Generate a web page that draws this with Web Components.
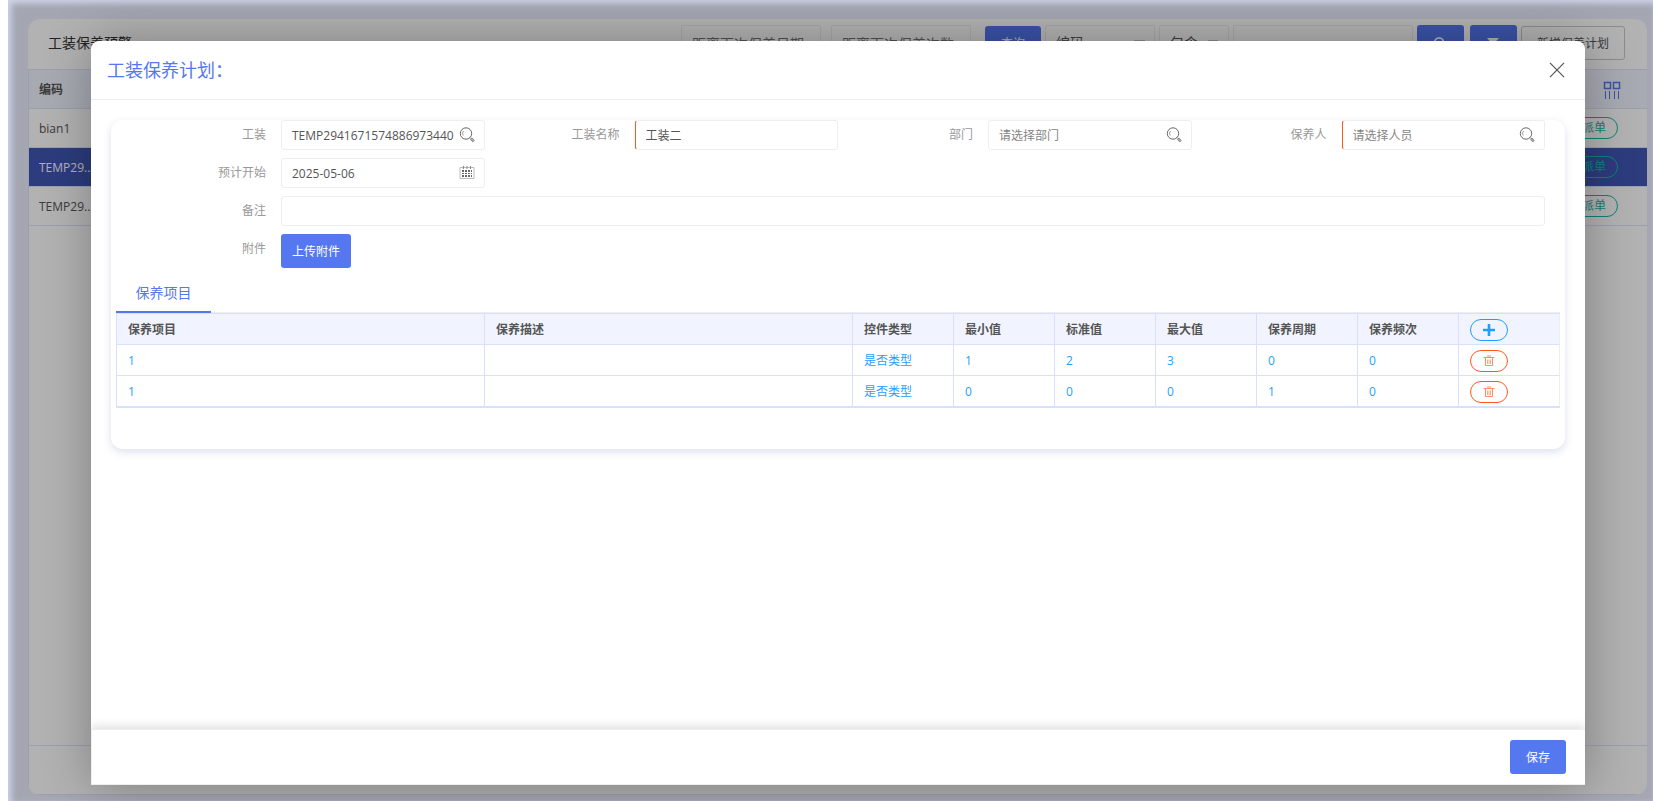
<!DOCTYPE html>
<html lang="zh-CN">
<head>
<meta charset="utf-8">
<title>工装保养预警</title>
<style>
  html, body { height: 100%; margin: 0; }
  body {
    --primary: #5578f0;
    --line: #d9e0fc;
    --head: #f1f4ff;
    background: #fff;
    color: #555;
    font: 12px/20px "Open Sans", "Noto Sans CJK SC", sans-serif;
    overflow: hidden;
  }
</style>
</head>
<body>
<app-shell>
  <warning-page></warning-page>
  <plan-dialog slot="overlay" heading="工装保养计划：">
    <plan-form></plan-form>
    <item-table></item-table>
    <ui-button slot="footer" size="save">保存</ui-button>
  </plan-dialog>
</app-shell>

<script>
const define = (name, html, setup) => {
  const template = document.createElement('template');
  template.innerHTML = '<style>*{box-sizing:border-box}</style>' + html;
  customElements.define(name, class extends HTMLElement {
    constructor() {
      super();
      this.attachShadow({ mode: 'open' }).append(template.content.cloneNode(true));
    }
    connectedCallback() {
      if (setup && !this.ready) { this.ready = true; setup(this, this.shadowRoot); }
    }
  });
};

const icons = {
  search: '<svg width="16" height="16" viewBox="0 0 16 16" fill="none" stroke="#666"><circle cx="7" cy="6.5" r="5.7"/><path d="M4.2 8.5A3.5 3.5 0 0 1 4.6 4" stroke="#999"/><path d="M11 10.5l1 1"/><path d="M12 11.5l2.8 2.8" stroke-width="2.6" stroke="#777"/><path d="M12.3 11.8l2.2 2.2" stroke="#eee" stroke-width=".9"/></svg>',
  date: '<svg width="16" height="16" viewBox="0 0 16 16"><path d="M1 2.5h14v11H1z" fill="none" stroke="#bbb"/><path d="M4.500 1v3M8 1v3M11.500 1v3" stroke="#888"/><path d="M3 5h2v2H3zM6 5h2v2H6zM9 5h2v2H9zM12 5h1v2h-1zM3 8h2v1H3zM6 8h2v1H6zM9 8h2v1H9zM12 8h1v1h-1zM3 10h2v2H3zM6 10h2v2H6zM9 10h2v2H9zM12 10h1v2h-1z" fill="#666"/></svg>'
};

define('ui-button', `
<style>
  :host { display: inline-flex; flex: none; }
  button {
    height: 34px; padding: 2px 11px 0; border: 0; border-radius: 3px;
    background: var(--primary); color: #fff; font: inherit; cursor: pointer;
  }
  :host([size="query"]) button, :host([size="save"]) button { padding: 2px 16px 0; }
  :host([kind="outline"]) button { padding: 2px 15px 0; border: 1px solid #c9c9c9; background: #fff; color: #555; }
  :host([kind="icon"]) button { display: grid; place-items: center; width: 47px; height: 36px; padding: 0; }
  :host([kind="pill"]) button {
    height: 22px; padding: 0 11px; border: 1px solid #16baaa; border-radius: 11px;
    background: transparent; color: #16baaa; line-height: 20px;
  }
</style>
<button type="button"><slot></slot></button>`, (host, root) => {
  if (host.hasAttribute('label')) root.querySelector('button').setAttribute('aria-label', host.getAttribute('label'));
});

define('app-shell', `
<style>
  :host { display: block; height: 100%; padding-left: 8px; }
  .stage { position: relative; display: flex; height: 100%; padding: 19px 6px 6px 20px; background: #ebf0ff; }
  .shade {
    position: absolute; inset: 0; display: flex; padding: 41px 68px 16px 83px;
    background: rgba(0,0,0,.3); box-shadow: inset 3px 3px 6px rgba(222,226,250,.8);
  }
</style>
<div class="stage"><slot></slot><div class="shade"><slot name="overlay"></slot></div></div>`);

define('warning-bar', `
<style>
  :host { display: flex; align-items: center; height: 48px; margin-bottom: 2px; padding: 0 22px 0 20px; gap: 4px; font-size: 14px; }
  h1 { flex: 1; margin: 0; color: #333; font: inherit; }
  .group { display: flex; gap: 4px; }
  .conditions { gap: 10px; margin-right: 10px; }
  .actions { gap: 6px; }
  input, select {
    height: 36px; border: 1px solid #eee; border-radius: 2px; padding: 0 10px;
    background: #fff; color: #555; font: inherit; width: 140px;
  }
  select {
    appearance: none; width: 110px;
    background: linear-gradient(to bottom right, #c2c2c2 50%, transparent 50%) right 9px top 14px / 6px 6px no-repeat,
      linear-gradient(to bottom left, #c2c2c2 50%, transparent 50%) right 15px top 14px / 6px 6px no-repeat, #fff;
  }
  select.short { width: 70px; }
  .keyword { width: 180px; }
  ui-button { font-size: 12px; }
</style>
<h1>工装保养预警</h1>
<div class="group conditions">
  <input aria-label="距离下次保养日期" placeholder="距离下次保养日期">
  <input aria-label="距离下次保养次数" placeholder="距离下次保养次数">
</div>
<ui-button size="query">查询</ui-button>
<div class="group">
  <select aria-label="字段"><option>编码</option></select>
  <select aria-label="条件" class="short"><option>包含</option></select>
  <input aria-label="关键字" class="keyword">
</div>
<div class="group actions">
  <ui-button kind="icon" label="搜索"><svg width="14" height="14" viewBox="0 0 16 16" fill="none" stroke="#fff" stroke-width="2"><circle cx="7" cy="7" r="5"/><path d="M11 11l4 4"/></svg></ui-button>
  <ui-button kind="icon" label="筛选"><svg width="12" height="12" viewBox="0 0 12 12" fill="#fff"><path d="M0 1h12L7.500 6v6l-3-2V6z"/></svg></ui-button>
</div>
<ui-button kind="outline">新增保养计划</ui-button>`);

define('warning-table', `
<style>
  :host { display: block; flex: 1; border: solid #dfe4ff; border-width: 1px 0 1px 1px; }
  table { width: 100%; border-collapse: separate; border-spacing: 0; table-layout: fixed; }
  th, td { height: 39px; padding: 2px 10px 0; border-bottom: 1px solid #dfe4ff; text-align: left; white-space: nowrap; }
  th { background: var(--head); }
  th:last-child, td:last-child { width: 140px; padding: 0 29px; text-align: right; }
  th:last-child { padding: 0 26px; }
  .selected td { background: #4056b3; color: #fff; }
  svg, ui-button { vertical-align: middle; }
</style>
<table>
  <thead><tr><th>编码</th><th><svg width="18" height="18" viewBox="0 0 18 18" fill="none" stroke="#5578f0"><path stroke-width="1.500" d="M1.500 1.500h6v6h-6zM10.500 1.500h6v6h-6z"/><path d="M2.500 10v8M6.500 10v8M11.500 10v8M15.500 10v8"/></svg></th></tr></thead>
  <tbody>
    <tr><td>bian1</td><td><ui-button kind="pill">派单</ui-button></td></tr>
    <tr class="selected"><td>TEMP29...</td><td><ui-button kind="pill">派单</ui-button></td></tr>
    <tr><td>TEMP29...</td><td><ui-button kind="pill">派单</ui-button></td></tr>
  </tbody>
</table>`);

define('warning-page', `
<style>
  :host { display: flex; flex: 1; flex-direction: column; min-width: 0; border-radius: 12px; background: #fff; overflow: hidden; }
  footer { height: 49px; border: solid #dfe4ff; border-width: 0 0 1px 1px; }
</style>
<warning-bar></warning-bar><warning-table></warning-table><footer></footer>`);

define('plan-dialog', `
<style>
  :host { display: flex; flex: 1; min-width: 0; }
  section {
    display: flex; flex: 1; flex-direction: column; min-width: 0; background: #fff;
    border-radius: 8px 8px 0 0; box-shadow: 1px 1px 50px rgba(0,0,0,.3);
  }
  header { display: flex; justify-content: space-between; align-items: center; height: 59px; padding: 0 20px 0 16px; border-bottom: 1px solid #eee; }
  h2 { margin: 0; color: var(--primary); font: inherit; font-size: 18px; }
  .close { display: grid; padding: 0; border: 0; background: none; cursor: pointer; }
  main { flex: 1; padding: 20px; }
  .card { padding-bottom: 41px; border-radius: 12px; box-shadow: 0 3px 8px rgba(80,100,170,.2); }
  footer {
    display: flex; justify-content: flex-end; padding: 10px 19px; border: 1px solid #eee; border-right: 0;
    box-shadow: 0 -2px 10px rgba(0,0,0,.15); clip-path: inset(-12px 0 0 0);
  }
</style>
<section role="dialog" aria-labelledby="title">
  <header>
    <h2 id="title"></h2>
    <button class="close" type="button" aria-label="关闭"><svg width="16" height="16" viewBox="0 0 17 17" stroke="#555" stroke-width="1.300"><path d="M1 1l15 15M16 1L1 16"/></svg></button>
  </header>
  <main><div class="card"><slot></slot></div></main>
  <footer><slot name="footer"></slot></footer>
</section>`, (host, root) => {
  root.querySelector('h2').textContent = host.getAttribute('heading');
});

define('form-field', `
<style>
  :host { display: flex; min-width: 0; }
  label { flex: none; width: 150px; padding: 5px 15px 5px 0; color: #999; text-align: right; }
  .box { display: flex; align-items: center; flex: 1; min-width: 0; height: 30px; padding: 0 9px 0 10px; border: 1px solid #eee; border-radius: 3px; background: #fff; }
  :host([required]) .box { border-left-color: #ff5722; }
  input { flex: 1; min-width: 0; height: 28px; padding: 0; border: 0; outline: 0; background: none; color: #555; font: inherit; }
  input::placeholder { color: #858585; }
  svg { flex: none; }
</style>
<label for="control"></label><div class="box"><input id="control"></div>`, (host, root) => {
  const input = root.querySelector('input');
  root.querySelector('label').textContent = host.getAttribute('label');
  input.value = host.getAttribute('value') || '';
  input.placeholder = host.getAttribute('placeholder') || '';
  root.querySelector('.box').insertAdjacentHTML('beforeend', icons[host.getAttribute('icon')] || '');
});

define('plan-form', `
<style>
  :host { display: block; padding: 0 20px; }
  form { display: grid; grid-template-columns: repeat(4, minmax(0, 1fr)); row-gap: 8px; }
  .start { grid-column: 1; }
  .wide { grid-column: 1 / -1; }
  .attach { display: flex; }
  .attach span { width: 150px; padding: 5px 15px 5px 0; color: #999; text-align: right; }
</style>
<form>
  <form-field label="工装" value="TEMP2941671574886973440" icon="search"></form-field>
  <form-field label="工装名称" value="工装二" required></form-field>
  <form-field label="部门" placeholder="请选择部门" icon="search"></form-field>
  <form-field label="保养人" placeholder="请选择人员" icon="search" required></form-field>
  <form-field class="start" label="预计开始" value="2025-05-06" icon="date"></form-field>
  <form-field class="wide" label="备注"></form-field>
  <div class="wide attach"><span>附件</span><ui-button>上传附件</ui-button></div>
</form>`);

define('tab-button', `
<style>
  :host { display: block; }
  button { width: 95px; height: 40px; padding: 2px 0 0; border: 0; border-bottom: 2px solid var(--primary); background: none; color: var(--primary); font: inherit; font-size: 14px; }
</style>
<button type="button" role="tab" aria-selected="true"><slot></slot></button>`);

define('item-table', `
<style>
  :host { display: block; margin: 5px 5px 0; }
  [role="tablist"] { display: flex; height: 40px; border-bottom: 1px solid #eee; }
  table { width: 100%; border-collapse: separate; border-spacing: 0; table-layout: fixed; border: solid var(--line); border-width: 1px 0 1px 1px; }
  th, td { width: 101px; height: 31px; padding: 2px 11px 0; border: solid var(--line); border-width: 0 1px 1px 0; text-align: left; }
  th:nth-child(-n+2) { width: auto; }
  tr > :last-child { border-right-color: #eee; }
  th { background: var(--head); }
  td { color: #1e9fff; }
  button { display: grid; place-items: center; width: 38px; height: 22px; margin: 0; padding: 0; border: 1px solid #ff5722; border-radius: 11px; background: none; }
  .add { border-color: #1e9fff; }
</style>
<div role="tablist"><tab-button>保养项目</tab-button></div>
<table>
  <thead><tr>
    <th>保养项目</th><th>保养描述</th><th>控件类型</th><th>最小值</th><th>标准值</th><th>最大值</th><th>保养周期</th><th>保养频次</th>
    <th><button class="add" type="button" aria-label="添加"><svg width="12" height="12" viewBox="0 0 12 12" stroke="#1e9fff" stroke-width="2.600"><path d="M6 0v12M0 6h12"/></svg></button></th>
  </tr></thead>
  <tbody></tbody>
</table>`, (host, root) => {
  const trash = '<button type="button" aria-label="删除"><svg width="12" height="12" viewBox="0 0 12 12" fill="none" stroke="#ff8a66"><path d="M0.500 2.500h11M4 1h4M2.500 3v7.500h7V3"/><path d="M4.500 4.500v4.500M6 4.500v4.500M7.500 4.500v4.500" stroke="#ffab7a"/></svg></button>';
  const rows = [
    ['1', '', '是否类型', '1', '2', '3', '0', '0', trash],
    ['1', '', '是否类型', '0', '0', '0', '1', '0', trash]
  ];
  root.querySelector('tbody').innerHTML = rows.map(r => '<tr>' + r.map(c => '<td>' + c + '</td>').join('') + '</tr>').join('');
});
</script>
</body>
</html>
